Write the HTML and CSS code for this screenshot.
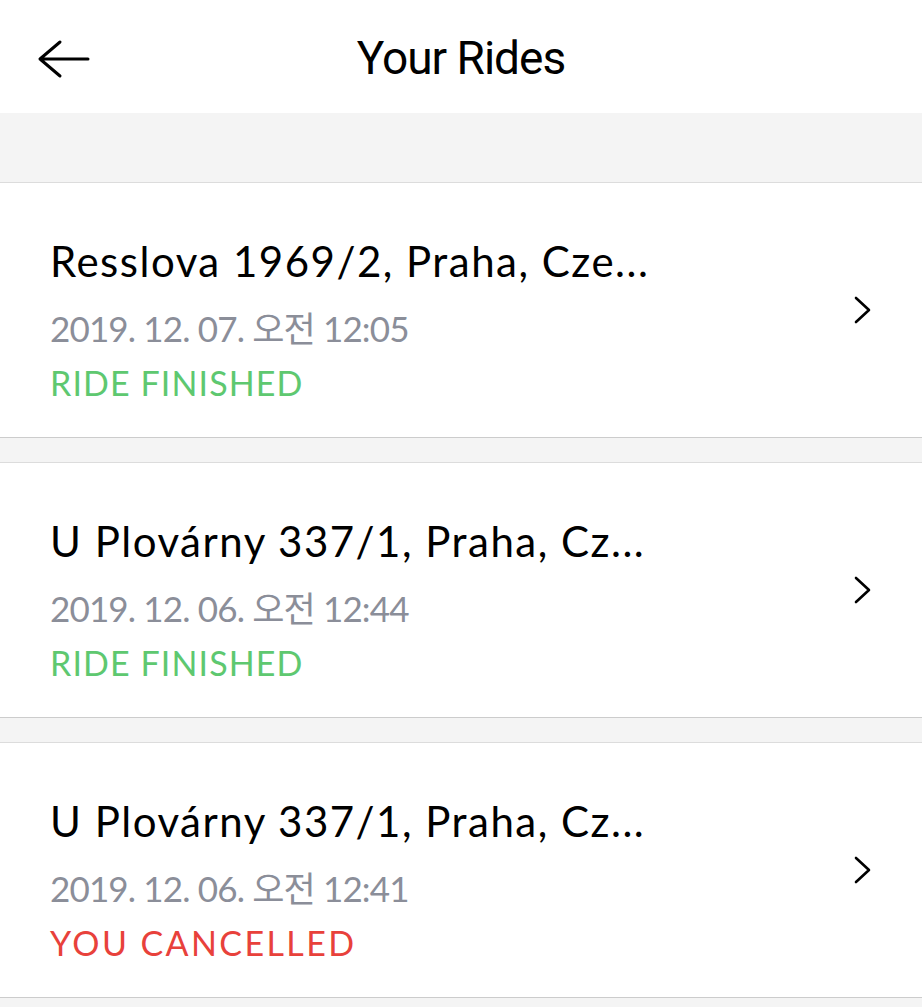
FILE: index.html
```html
<!DOCTYPE html>
<html lang="en">
<head>
<meta charset="utf-8">
<title>Your Rides</title>
<link rel="stylesheet" href="styles.css">
</head>
<body>
<header class="topbar">
  <button class="back" aria-label="Back">
    <svg width="60" height="50" viewBox="0 0 60 50" fill="none" stroke="#000" stroke-width="3" stroke-linecap="round" stroke-linejoin="round">
      <path d="M10 27 H58 M30 10 L10 27 L30 44"/>
    </svg>
  </button>
  <h1 class="title">Your Rides</h1>
  <div></div>
</header>
<div class="spacer"></div>
<main class="rides">
  <a class="ride" href="#">
    <div class="info">
      <div class="addr">Resslova 1969/2, Praha, Cze...</div>
      <div class="date">2019. 12. 07. 오전 12:05</div>
      <div class="status finished">RIDE FINISHED</div>
    </div>
    <svg class="chev" width="20" height="30" viewBox="0 0 20 30" fill="none" stroke="#000" stroke-width="2.6" stroke-linecap="round" stroke-linejoin="round"><path d="M2 3 L15 15 L2 27"/></svg>
  </a>
  <a class="ride" href="#">
    <div class="info">
      <div class="addr">U Plovárny 337/1, Praha, Cz...</div>
      <div class="date">2019. 12. 06. 오전 12:44</div>
      <div class="status finished">RIDE FINISHED</div>
    </div>
    <svg class="chev" width="20" height="30" viewBox="0 0 20 30" fill="none" stroke="#000" stroke-width="2.6" stroke-linecap="round" stroke-linejoin="round"><path d="M2 3 L15 15 L2 27"/></svg>
  </a>
  <a class="ride" href="#">
    <div class="info">
      <div class="addr">U Plovárny 337/1, Praha, Cz...</div>
      <div class="date">2019. 12. 06. 오전 12:41</div>
      <div class="status cancelled">YOU CANCELLED</div>
    </div>
    <svg class="chev" width="20" height="30" viewBox="0 0 20 30" fill="none" stroke="#000" stroke-width="2.6" stroke-linecap="round" stroke-linejoin="round"><path d="M2 3 L15 15 L2 27"/></svg>
  </a>
</main>
</body>
</html>
```
FILE: styles.css
```css
* { box-sizing: border-box; }
html, body { margin: 0; padding: 0; }
body {
  background: #f4f4f4;
  font-family: Lato, "Noto Sans CJK KR", sans-serif;
  color: #000;
  min-height: 1007px;
}
.topbar {
  height: 113px;
  background: #fff;
  display: grid;
  grid-template-columns: 1fr auto 1fr;
  align-items: center;
}
.back {
  justify-self: start;
  border: 0;
  background: none;
  padding: 0;
  margin-left: 30px;
  margin-top: -1px;
  display: flex;
}
.title {
  margin: 0;
  padding-top: 2px;
  text-align: center;
  font-family: Roboto, sans-serif;
  font-weight: 400;
  font-size: 46px;
  letter-spacing: -1px;
  line-height: 113px;
}
.spacer { height: 69px; }
.rides {
  display: flex;
  flex-direction: column;
  gap: 24px;
}
.ride {
  display: flex;
  align-items: flex-start;
  height: 256px;
  background: #fff;
  border-top: 1px solid #dcdcdc;
  border-bottom: 1px solid #cccccc;
  padding: 53px 48px 0 50px;
  text-decoration: none;
  color: inherit;
}
.info { flex: 1; display: flex; flex-direction: column; }
.addr {
  font-size: 42px;
  line-height: 50px;
  letter-spacing: 1.5px;
  color: #000;
}
.date {
  font-size: 35px;
  line-height: 42px;
  letter-spacing: -0.85px;
  margin-top: 21px;
  color: #8b8e99;
}
.status {
  font-size: 34px;
  line-height: 40px;
  margin-top: 14px;
}
.finished { color: #5ec870; letter-spacing: 1.1px; }
.cancelled { color: #e8413b; letter-spacing: 2.4px; }
.chev { flex: none; align-self: center; margin-top: -53px; }
```
